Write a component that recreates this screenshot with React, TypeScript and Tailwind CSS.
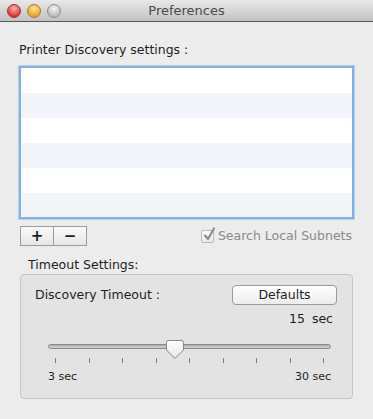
import React from "react";

const font = { fontFamily: '"DejaVu Sans", "Liberation Sans", sans-serif' };

function Light({ from, to, border }: { from: string; to: string; border: string }) {
  return (
    <div
      className="w-[14px] h-[14px] rounded-full border"
      style={{ background: `radial-gradient(circle at 50% 30%, ${from} 0%, ${to} 75%)`, borderColor: border }}
    />
  );
}

export default function App() {
  const ticks = [0, 1, 2, 3, 4, 5, 6, 7, 8];
  return (
    <div className="w-[373px] h-[419px] bg-[#ececec] flex flex-col text-[#1e1e1e]" style={font}>
      {/* Title bar */}
      <div className="relative h-[22px] shrink-0 border-b border-[#585858] bg-gradient-to-b from-[#e9e9e9] to-[#c2c2c2] flex items-center">
        <div className="flex items-center gap-[6px] pl-[7px]">
          <Light from="#ffb0ad" to="#d7302b" border="#a2312d" />
          <Light from="#ffe29a" to="#e4a226" border="#a4791f" />
          <Light from="#f4f4f4" to="#b9b9b9" border="#8e8e8e" />
        </div>
        <div className="absolute inset-0 flex items-center justify-center text-[13px] text-[#4a4a4a]">Preferences</div>
      </div>

      <div className="flex flex-col px-[19px]">
        <div className="mt-[20px] h-[16px] leading-[16px] text-[12.5px]">Printer Discovery settings :</div>

        {/* List */}
        <div className="mt-[8px] h-[153px] w-[335px] border-2 border-[#86b0e0] shadow-[0_0_0_1px_#b5cff0] flex flex-col bg-white overflow-hidden">
          {[0, 1, 2, 3, 4, 5].map((i) => (
            <div key={i} className={`h-[25px] shrink-0 ${i % 2 === 1 ? "bg-[#f2f5fa]" : "bg-white"}`} />
          ))}
        </div>

        {/* +/- row */}
        <div className="mt-[7px] flex items-center justify-between">
          <div className="ml-[1px] flex h-[20px] w-[67px] border border-[#9c9c9c] bg-gradient-to-b from-[#fafafa] to-[#e6e6e6]">
            <div className="flex-1 flex items-center justify-center border-r border-[#9c9c9c] text-[15px] font-bold leading-none">+</div>
            <div className="flex-1 flex items-center justify-center text-[15px] font-bold leading-none">−</div>
          </div>
          <div className="flex items-center mr-[2px] gap-[4px]">
            <div className="relative w-[13px] h-[13px] rounded-[2px] border border-[#b8b8b8] bg-gradient-to-b from-[#fbfbfb] to-[#e9e9e9]">
              <svg className="absolute left-[1px] top-[-4px]" width="13" height="15" viewBox="0 0 13 15">
                <path d="M2 8.5 L5 12 L11 1.5" fill="none" stroke="#8c8c8c" strokeWidth="2.2" strokeLinecap="round" strokeLinejoin="round" />
              </svg>
            </div>
            <span className="text-[12.5px] text-[#8a8a8a]">Search Local Subnets</span>
          </div>
        </div>

        <div className="mt-[11px] ml-[9px] h-[16px] leading-[16px] text-[12.5px]">Timeout Settings:</div>

        {/* Group box */}
        <div className="mt-[1px] ml-[1px] w-[333px] h-[125px] rounded-[4px] border border-[#c6c6c6] bg-[#e3e3e3] flex flex-col px-[14px]">
          <div className="mt-[10px] flex items-center justify-between">
            <span className="text-[12.5px]">Discovery Timeout :</span>
            <div className="mr-[1px] w-[105px] h-[20px] rounded-[4px] border border-[#9a9a9a] bg-gradient-to-b from-white to-[#ececec] flex items-center justify-center text-[12.5px]">
              Defaults
            </div>
          </div>
          <div className="mt-[6px] flex justify-end gap-[7px] pr-[5px] text-[12.5px] leading-[16px]">
            <span>15</span>
            <span>sec</span>
          </div>
          {/* Slider */}
          <div className="relative mt-[13px] ml-[13px] w-[283px] h-[24px]">
            <div className="absolute left-0 right-0 top-[4px] h-[5px] rounded-full border border-[#8a8a8a] bg-gradient-to-b from-[#aaaaaa] to-[#d6d6d6]" />
            <svg className="absolute left-[118px] top-0" width="18" height="20" viewBox="0 0 18 20">
              <defs>
                <linearGradient id="th" x1="0" y1="0" x2="0" y2="1">
                  <stop offset="0" stopColor="#ffffff" />
                  <stop offset="1" stopColor="#e6e6e6" />
                </linearGradient>
              </defs>
              <path d="M2.5 0.5 H15.5 Q17.5 0.5 17.5 2.5 V10 L9 18.5 L0.5 10 V2.5 Q0.5 0.5 2.5 0.5 Z" fill="url(#th)" stroke="#858585" />
            </svg>
            {ticks.map((t) => (
              <div
                key={t}
                className="absolute top-[18px] w-[1px] h-[5px] bg-[#7a7a7a]"
                style={{ left: 7 + Math.round(t * 33.5) }}
              />
            ))}
          </div>
          <div className="mt-[6px] ml-[13px] w-[283px] flex justify-between text-[11px] leading-[14px]">
            <span>3 sec</span>
            <span>30 sec</span>
          </div>
        </div>
      </div>
    </div>
  );
}
